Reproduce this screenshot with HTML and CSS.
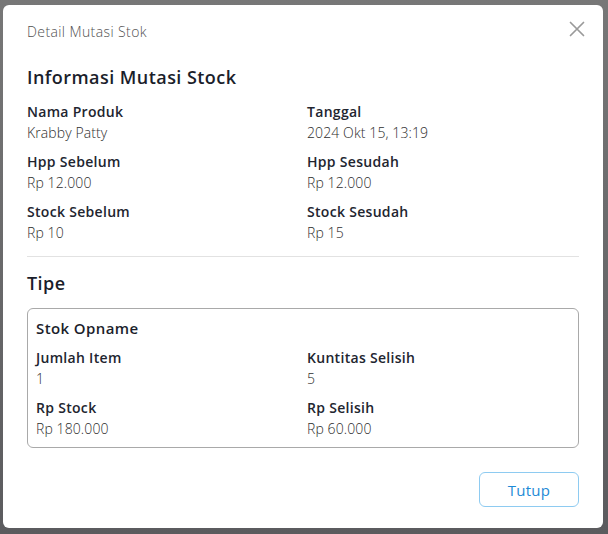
FILE: index.html
```html
<!DOCTYPE html>
<html lang="id">
<head>
<meta charset="utf-8">
<title>Detail Mutasi Stok</title>
<link rel="stylesheet" href="styles.css">
</head>
<body>
<div class="backdrop">
  <div class="modal">
    <div class="modal-header">
      <span class="modal-title">Detail Mutasi Stok</span>
      <button class="close" aria-label="Tutup">
        <svg width="16" height="16" viewBox="0 0 16 16"><path d="M1.5 1.5 L14.5 14.5 M14.5 1.5 L1.5 14.5" stroke="#9a9a9a" stroke-width="1.7" stroke-linecap="round"/></svg>
      </button>
    </div>
    <div class="modal-body">
      <h2 class="section-title">Informasi Mutasi Stock</h2>
      <div class="grid">
        <div class="field"><div class="label">Nama Produk</div><div class="value">Krabby Patty</div></div>
        <div class="field"><div class="label">Tanggal</div><div class="value">2024 Okt 15, 13:19</div></div>
        <div class="field"><div class="label">Hpp Sebelum</div><div class="value">Rp 12.000</div></div>
        <div class="field"><div class="label">Hpp Sesudah</div><div class="value">Rp 12.000</div></div>
        <div class="field"><div class="label">Stock Sebelum</div><div class="value">Rp 10</div></div>
        <div class="field"><div class="label">Stock Sesudah</div><div class="value">Rp 15</div></div>
      </div>
      <hr class="divider">
      <h2 class="section-title tipe">Tipe</h2>
      <div class="type-box">
        <div class="type-name">Stok Opname</div>
        <div class="grid">
          <div class="field"><div class="label">Jumlah Item</div><div class="value">1</div></div>
          <div class="field"><div class="label">Kuntitas Selisih</div><div class="value">5</div></div>
          <div class="field"><div class="label">Rp Stock</div><div class="value">Rp 180.000</div></div>
          <div class="field"><div class="label">Rp Selisih</div><div class="value">Rp 60.000</div></div>
        </div>
      </div>
    </div>
    <div class="modal-footer">
      <button class="btn-outline">Tutup</button>
    </div>
  </div>
</div>
</body>
</html>
```
FILE: styles.css
```css
* { box-sizing: border-box; }
html, body { margin: 0; padding: 0; }
body {
  font-family: "Open Sans", "Noto Sans", sans-serif;
  color: #1b1e2b;
}
.backdrop {
  width: 608px;
  height: 534px;
  background: linear-gradient(#777777, #5b5b5e);
  padding: 5px 5px 0 3px;
  overflow: hidden;
}
.modal {
  width: 600px;
  height: 523px;
  background: #fff;
  border-radius: 6px;
  display: flex;
  flex-direction: column;
}
.modal-header {
  display: flex;
  justify-content: space-between;
  align-items: center;
  padding: 17px 18px 17px 24px;
  height: 54px;
}
.modal-title {
  font-size: 14px;
  font-weight: 300;
  line-height: 20px;
  letter-spacing: 0.4px;
  color: #505050;
}
.close {
  border: 0;
  background: none;
  padding: 0;
  width: 16px;
  height: 16px;
  display: flex;
  margin-top: -6px;
}
.modal-body {
  padding: 6px 24px 0;
}
.section-title {
  margin: 0;
  font-size: 18px;
  font-weight: 600;
  line-height: 24px;
  letter-spacing: 0.45px;
  color: #1b1e2b;
}
.grid {
  display: grid;
  grid-template-columns: 1fr 1fr;
  column-gap: 8px;
  row-gap: 9px;
  margin-top: 13px;
}
.label {
  font-size: 14px;
  font-weight: 600;
  line-height: 20px;
  letter-spacing: 0.3px;
  color: #22252f;
}
.value {
  font-size: 14px;
  font-weight: 300;
  line-height: 21px;
  letter-spacing: 0.1px;
  color: #2e2e2e;
}
.divider {
  border: 0;
  border-top: 1px solid #e2e2e2;
  margin: 13px 0 0;
}
.tipe { margin-top: 14px; }
.type-box {
  margin-top: 13px;
  border: 1px solid #a9a9a9;
  border-radius: 6px;
  padding: 9px 8px 8px;
}
.type-name {
  font-size: 15px;
  font-weight: 600;
  line-height: 20px;
  letter-spacing: 0.4px;
  color: #1b1e2b;
}
.type-box .grid { margin-top: 10px; }
.modal-footer {
  display: flex;
  justify-content: flex-end;
  padding: 24px 24px 20px;
}
.btn-outline {
  width: 100px;
  height: 35px;
  border: 1px solid #8ecbf1;
  border-radius: 6px;
  background: #fff;
  color: #1e8ad6;
  font-family: inherit;
  font-size: 15px;
  font-weight: 500;
  letter-spacing: 0.3px;
}
```
